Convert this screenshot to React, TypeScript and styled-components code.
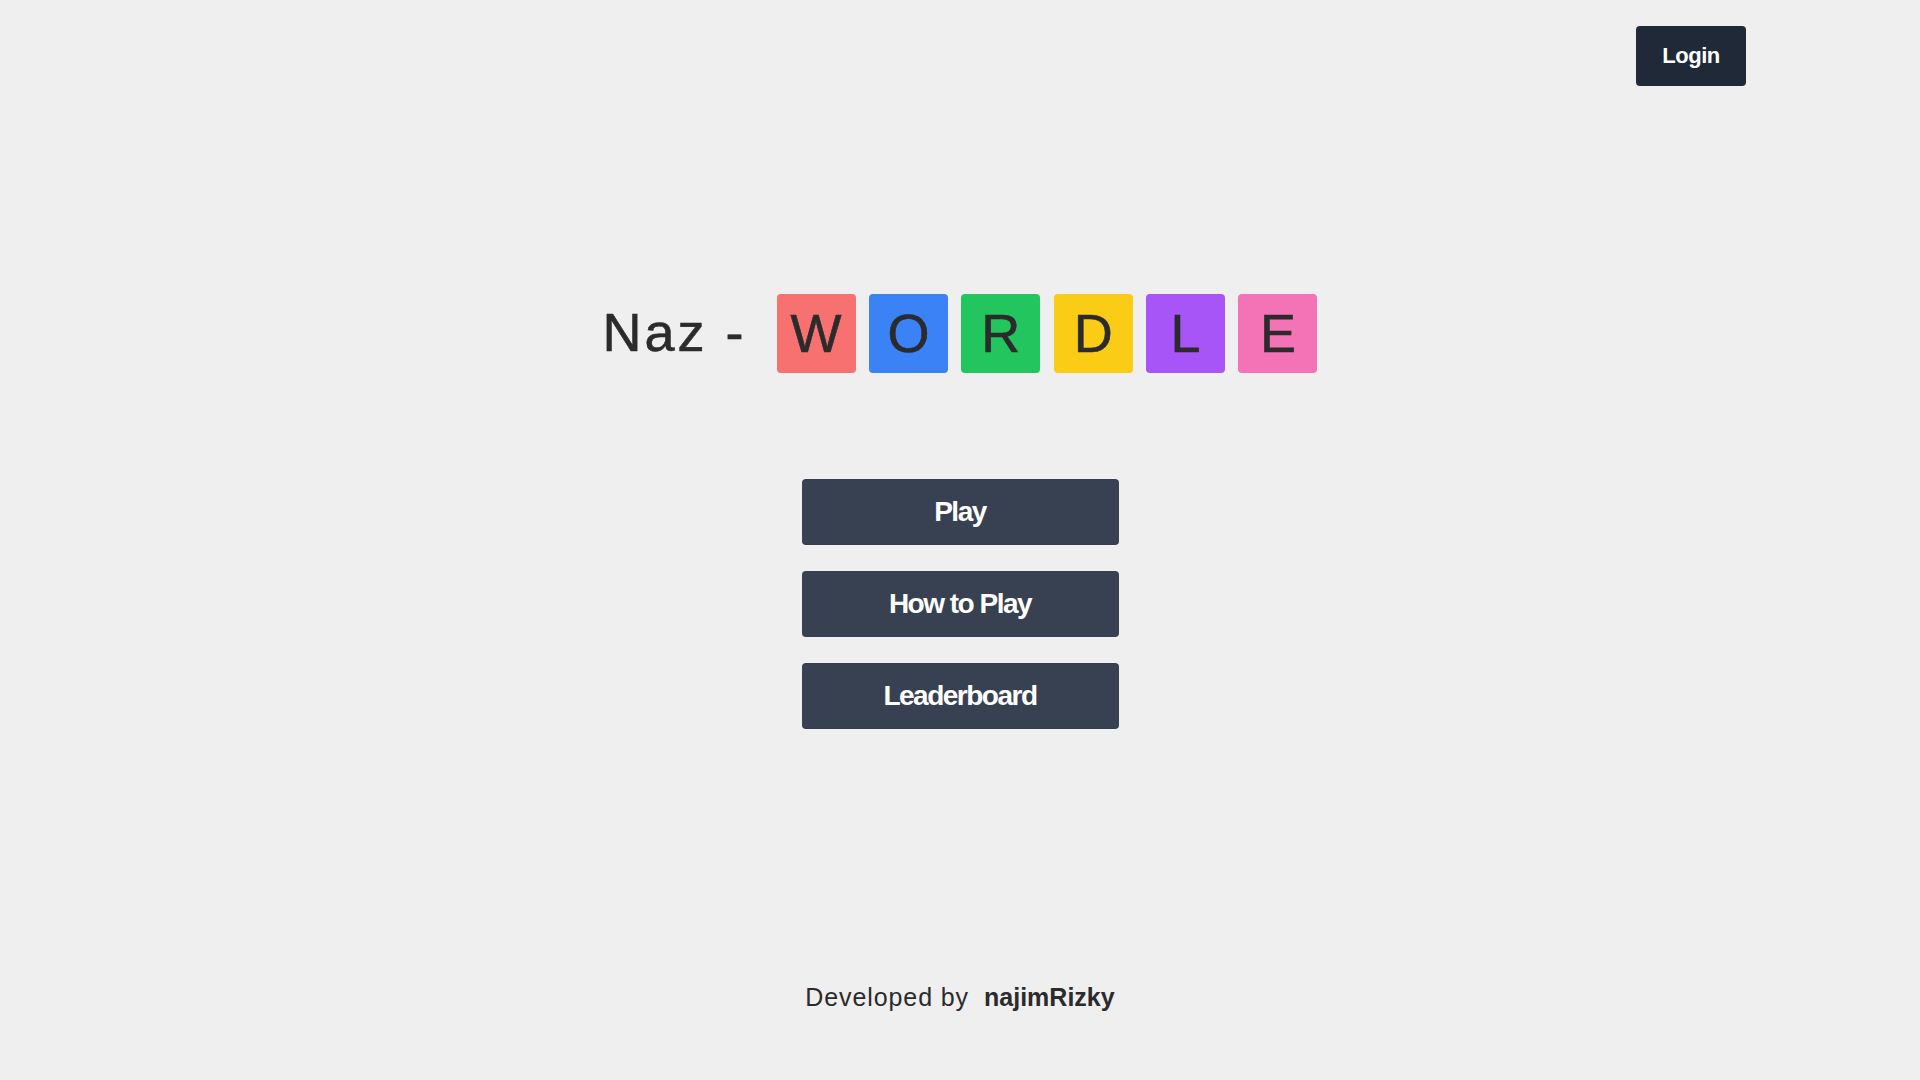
import React from "react";
import styled, { createGlobalStyle } from "styled-components";

const GlobalStyle = createGlobalStyle`
  html, body {
    margin: 0;
    padding: 0;
    background: #efefef;
    font-family: "Liberation Sans", Arial, Helvetica, sans-serif;
  }
  * { box-sizing: border-box; }
`;

const Page = styled.div`
  min-height: 1080px;
  display: flex;
  flex-direction: column;
  align-items: center;
  background: #efefef;
`;

const Header = styled.header`
  width: 100%;
  display: flex;
  justify-content: flex-end;
  padding: 26px 174px 0 0;
`;

const LoginButton = styled.button`
  width: 110px;
  height: 60px;
  border: none;
  border-radius: 4px;
  background: #1f2937;
  color: #ffffff;
  font-family: "Liberation Sans", Arial, sans-serif;
  font-weight: 700;
  font-size: 22px;
  letter-spacing: -0.5px;
  cursor: pointer;
`;

const Title = styled.h1`
  margin: 208px 0 0;
  display: flex;
  align-items: center;
  font-weight: 400;
`;

const Prefix = styled.span`
  font-size: 54px;
  letter-spacing: 3px;
  color: #2b2b2b;
  -webkit-text-stroke: 0.6px #2b2b2b;
  margin-right: 30px;
  transform: translateY(-2px);
`;

const Tiles = styled.div`
  display: flex;
  gap: 13.4px;
`;

const Tile = styled.span<{ $bg: string }>`
  width: 79px;
  height: 79px;
  border-radius: 4px;
  background: ${(p) => p.$bg};
  color: #2b2b2b;
  -webkit-text-stroke: 0.6px #2b2b2b;
  font-size: 54px;
  display: flex;
  align-items: center;
  justify-content: center;
  padding-bottom: 2px;
`;

const Menu = styled.nav`
  margin-top: 106px;
  display: flex;
  flex-direction: column;
  gap: 26px;
`;

const MenuButton = styled.button`
  width: 317px;
  height: 66px;
  border: none;
  border-radius: 4px;
  background: #374151;
  color: #ffffff;
  font-family: "Liberation Sans", Arial, sans-serif;
  font-weight: 700;
  font-size: 28px;
  letter-spacing: -1.5px;
  cursor: pointer;
`;

const Footer = styled.footer`
  margin-top: auto;
  margin-bottom: 68px;
  font-size: 25px;
  color: #2b2b2b;
  display: flex;
  align-items: baseline;
  gap: 15px;
`;

const Credit = styled.span`
  letter-spacing: 0.9px;
`;

const Author = styled.span`
  font-weight: 700;
`;

const letters: [string, string][] = [
  ["W", "#f87171"],
  ["O", "#3b82f6"],
  ["R", "#22c55e"],
  ["D", "#facc15"],
  ["L", "#a855f7"],
  ["E", "#f472b6"],
];

export default function App() {
  return (
    <>
      <GlobalStyle />
      <Page>
        <Header>
          <LoginButton>Login</LoginButton>
        </Header>
        <Title>
          <Prefix>Naz -</Prefix>
          <Tiles>
            {letters.map(([l, c]) => (
              <Tile key={l} $bg={c}>
                {l}
              </Tile>
            ))}
          </Tiles>
        </Title>
        <Menu>
          <MenuButton>Play</MenuButton>
          <MenuButton>How to Play</MenuButton>
          <MenuButton>Leaderboard</MenuButton>
        </Menu>
        <Footer>
          <Credit>Developed by</Credit>
          <Author>najimRizky</Author>
        </Footer>
      </Page>
    </>
  );
}
